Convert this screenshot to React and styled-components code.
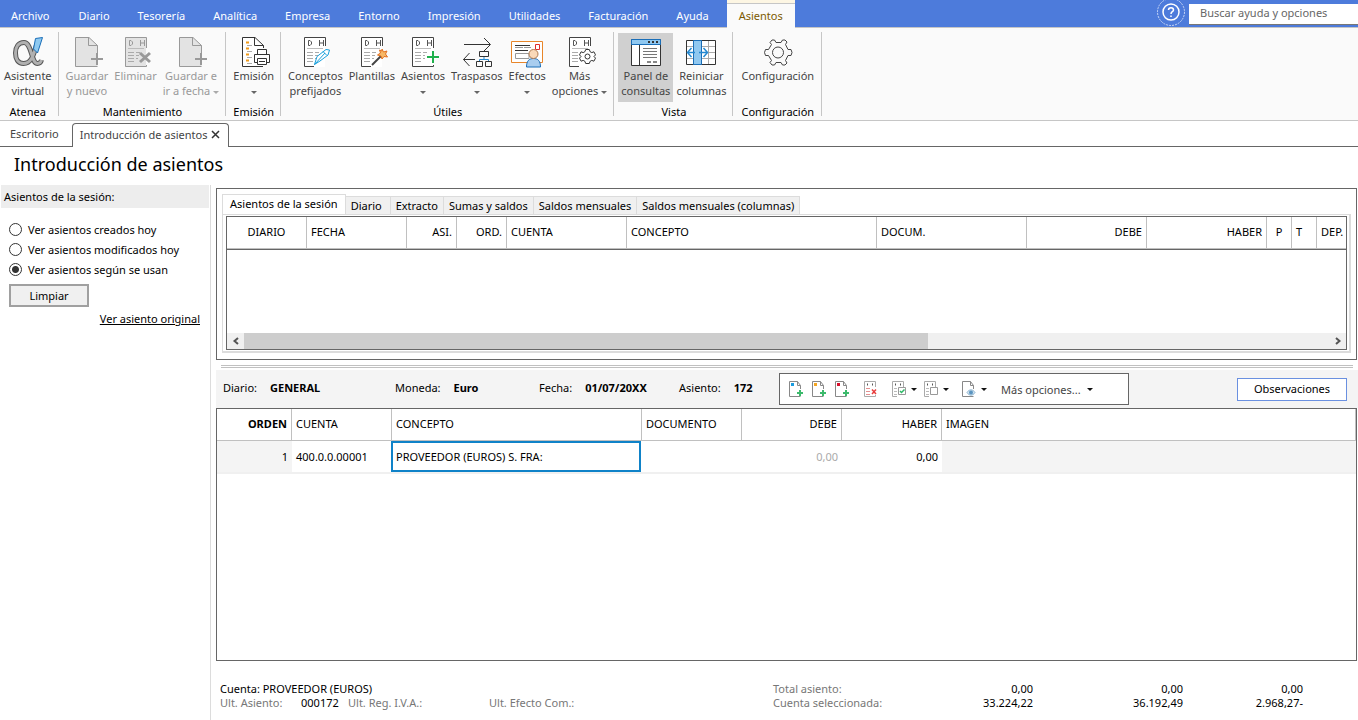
import React, { useState } from 'react';
import styled, { createGlobalStyle, css } from 'styled-components';

const GlobalStyle = createGlobalStyle`
	* {
		box-sizing: border-box;
	}

	body {
		margin: 0;
		background: #fff;
		color: #000;
		font-family: 'Noto Sans', 'Open Sans', sans-serif;
		font-size: 11px;
		line-height: 15px;
	}

	button, input {
		font: inherit;
		color: inherit;
		margin: 0;
	}

	button {
		padding: 0;
		border: 0;
		background: none;
	}
`;

const Page = styled.div`
	display: flex;
	flex-direction: column;
	min-height: 100vh;
	overflow: hidden;
`;

/* menu bar */

const MenuBar = styled.header`
	display: flex;
	justify-content: space-between;
	height: 28px;
	background: #4d7bdb;
	border-bottom: 1px solid #c6c6c6;
`;

const Menu = styled.nav`
	display: flex;
	padding-top: 3px;
`;

const MenuItem = styled.button`
	padding: 0 14px;
	color: #fff;
	white-space: nowrap;

	&:first-child {
		padding: 0 15px 0 11px;
	}

	${({ $active }) => $active && css`
		height: 25px;
		padding: 0 12px 2px;
		margin-left: 4px;
		background: #fafafa;
		border-top: 1px solid #c6c6c6;
		box-shadow: 0 -3px #fdf6e3;
		color: #7d5a00;
	`}
`;

const SearchArea = styled.div`
	display: flex;
	align-items: flex-start;
	gap: 4px;
`;

const HelpButton = styled.button`
	width: 28px;
	height: 26px;
	svg { display: block; }
`;

const SearchInput = styled.input`
	width: 169px;
	height: 21px;
	margin-top: 4px;
	padding: 0 11px 3px;
	border: 0;
	border-bottom: 1px solid #777;
	border-radius: 0;
	background: #fff;
	&::placeholder {
		color: #666;
		opacity: 1;
	}
`;

/* ribbon */

const Ribbon = styled.div`
	display: flex;
	height: 93px;
	padding: 4px 0;
	background: #fafafa;
	border-bottom: 1px solid #c6c6c6;
`;

const Group = styled.section`
	display: flex;
	flex-direction: column;
	padding: 1px 3px 0 4px;
	border-right: 1px solid #c6c6c6;
	&:first-child {
		padding-left: 1px;
	}
	&:last-child {
		padding: 1px 4px 0 5px;
	}
`;

const GroupButtons = styled.div`
	display: flex;
	flex: none;
	height: 69px;
`;

const GroupTitle = styled.h2`
	margin: 0;
	font-size: 11px;
	line-height: 20px;
	font-weight: 400;
	text-align: center;
`;

const ToolButton = styled.button`
	display: flex;
	flex-direction: column;
	align-items: center;
	padding: 3px;
	background: ${({ $pressed }) => ($pressed ? '#d0d0d0' : 'transparent')};
	color: ${({ disabled }) => (disabled ? '#999' : '#444')};
	white-space: nowrap;

	svg {
		display: block;
		flex: none;
	}
`;

const Caret = styled.i`
	display: inline-block;
	margin-left: ${({ $after }) => ($after ? '3px' : '0')};
	border: 3px solid transparent;
	border-top-color: ${({ $color }) => $color || 'currentColor'};
	border-bottom: 0;
	vertical-align: middle;
`;

/* document tabs */

const DocTabs = styled.div`
	display: flex;
	height: 26px;
	padding-top: 2px;
	border-bottom: 1px solid #666;
	color: #444;
`;

const DocTab = styled.button`
	display: flex;
	align-items: center;
	padding: 0 13px 2px 10px;

	${({ $active }) => $active && css`
		gap: 4px;
		height: 24px;
		padding: 0 8px 3px 7px;
		border: 1px solid #666;
		border-bottom: 0;
		border-radius: 4px 4px 0 0;
		background: #fff;
	`}
`;

const Title = styled.h1`
	height: 38px;
	margin: 0;
	padding-left: 14px;
	font-size: 18px;
	line-height: 34px;
	font-weight: 400;
`;

/* body */

const Body = styled.div`
	display: flex;
	flex: 1;
`;

const Sidebar = styled.aside`
	flex: none;
	width: 211px;
	border-right: 1px solid #dcdcdc;
`;

const SidebarTitle = styled.h2`
	margin: 0 1px 11px;
	padding: 4px 3px;
	background: #ededed;
	font-size: 11px;
	font-weight: 400;
`;

const SidebarBody = styled.div`
	display: flex;
	flex-direction: column;
	padding: 0 10px 0 9px;
`;

const Option = styled.label`
	display: flex;
	align-items: center;
	gap: 6px;
	height: 20px;

	input {
		appearance: none;
		width: 13px;
		height: 13px;
		border: 1px solid #333;
		border-radius: 50%;
		background: #fff;
	}

	input:checked {
		background: radial-gradient(circle, #333 0 3px, #fff 4px);
	}
`;

const ClearButton = styled.button`
	width: 80px;
	height: 23px;
	margin: 5px 0 4px;
	border: 2px solid #a0a0a0;
	background: #f0f0f0;
`;

const OriginalLink = styled.a`
	align-self: flex-end;
	color: #000;
`;

const Main = styled.main`
	display: flex;
	flex: 1;
	flex-direction: column;
	min-width: 0;
	padding: 3px 0 0 5px;
`;

const QueryPanel = styled.section`
	height: 172px;
	margin-right: 1px;
	padding: 5px;
	border: 1px solid #666;
`;

const QueryTabs = styled.div`
	display: flex;
	align-items: flex-end;
	height: 20px;
`;

const QueryTab = styled.button`
	min-width: 45px;
	height: 18px;
	padding: 0 5px;
	border: 1px solid #dcdcdc;
	border-left: 0;
	border-bottom: 0;
	background: #f0f0f0;
	text-align: left;
	white-space: nowrap;

	${({ $active }) => $active && css`
		height: 20px;
		padding: 0 7px 2px;
		border-left: 1px solid #dcdcdc;
		background: #fff;
	`}
`;

const QueryContent = styled.div`
	height: 139px;
	padding: 1px 2px 2px 3px;
	border: 1px solid #dcdcdc;
	border-width: 1px 2px 2px 1px;
`;

const QueryGrid = styled.div`
	display: flex;
	flex-direction: column;
	justify-content: space-between;
	height: 134px;
	border: 1px solid #666;
	overflow: hidden;
`;

const Table = styled.table`
	width: 100%;
	border-collapse: separate;
	border-spacing: 0;
	table-layout: fixed;
	white-space: nowrap;
`;

const Th = styled.th`
	height: 32px;
	padding: 0 4px 2px;
	border-right: 1px solid #c0c0c0;
	border-bottom: 1px solid #c0c0c0;
	font-weight: ${({ $bold }) => ($bold ? 700 : 400)};
	text-align: ${({ $align }) => $align || 'left'};
`;

const QueryTable = styled(Table)`
	border-bottom: 1px solid #666;
	th:last-child {
		padding-right: 0;
		border-right: 0;
	}
`;

const Scrollbar = styled.div`
	display: flex;
	height: 16px;
	background: #f0f0f0;

	button {
		flex: none;
		width: 17px;
		height: 16px;
	}

	svg {
		display: block;
		margin: 4px auto;
	}
`;

const Track = styled.div`
	flex: 1;
`;

const Thumb = styled.div`
	width: 63%;
	height: 16px;
	background: #cdcdcd;
`;

const Splitter = styled.div`
	height: 3px;
	margin: 5px 5px 2px;
	border: 1px solid #c0c0c0;
	border-width: 1px 0;
`;

const EntryBar = styled.div`
	display: flex;
	align-items: center;
	height: 38px;
	padding: 0 11px 0 7px;
	background: #f4f4f4;
`;

const Field = styled.div`
	display: flex;
	gap: 13px;
	width: ${({ $width }) => $width}px;
	padding-bottom: 3px;
	white-space: nowrap;
`;

const EntryTools = styled.div`
	display: flex;
	align-items: center;
	width: 350px;
	height: 32px;
	padding-left: 8px;
	border: 1px solid #666;
	background: #fff;
	color: #444;
`;

const EntryTool = styled.button`
	display: flex;
	align-items: center;
	gap: 4px;
	width: ${({ $width }) => $width || 23}px;
	svg { display: block; flex: none; }
`;

const MoreOptions = styled(EntryTool)`
	gap: 6px;
	width: auto;
	padding-left: 5px;
`;

const NotesButton = styled.button`
	width: 110px;
	height: 23px;
	margin-left: auto;
	padding-bottom: 2px;
	border: 1px solid #6a90e0;
	background: #fff;
`;

const EntryGrid = styled.section`
	flex: 1;
	margin-right: 1px;
	border: 1px solid #666;
`;

const Td = styled.td`
	height: 33px;
	padding: 0 4px 1px;
	border-bottom: 2px solid #f0f0f0;
	background: ${({ $shaded }) => ($shaded ? '#f4f4f4' : '#fff')};
	color: ${({ $muted }) => ($muted ? '#aaa' : '#000')};
	text-align: ${({ $align }) => $align || 'left'};
`;

const EditCell = styled(Td)`
	padding: 0;
`;

const CellInput = styled.input`
	display: block;
	width: 250px;
	height: 31px;
	margin-left: -1px;
	padding: 0 3px 1px;
	border: 2px solid #0f82c8;
	border-radius: 0;
	outline: 0;
`;

const Footer = styled.footer`
	display: flex;
	align-items: flex-start;
	justify-content: space-between;
	height: 59px;
	padding: 21px 55px 0 4px;
	line-height: 14px;
	color: #777;
	white-space: nowrap;

	b {
		color: #000;
		font-weight: 400;
	}
`;

const LastItems = styled.div`
	display: flex;
`;

const LastItem = styled.span`
	width: ${({ $width }) => $width}px;
`;

const Totals = styled.table`
	border-collapse: collapse;
	th, td {
		height: 14px;
		padding: 0;
		font-weight: 400;
		text-align: left;
	}
	td {
		width: 120px;
		color: #000;
		text-align: right;
	}
	td:nth-child(2), td:nth-child(3) {
		width: 150px;
	}
	th {
		width: 110px;
	}
`;

/* icons */

const Icon = ({ children, size = 32, height = size }) => (
	<svg width={size} height={height} viewBox={`0 0 ${size} ${height}`} fill="none" aria-hidden="true">
		{children}
	</svg>
);

const PagePlusIcon = () => (
	<Icon>
		<path d="M4.500 1.500H18L26.500 9.500V30.500H4.500Z" fill="#e3e3e3" />
		<path d="M26.500 17V9.500L18 1.500H4.500V30.500H26.500M17.500 1.500V9.500H26.500" stroke="#999" />
		<path d="M26 17V29M20 23H32" stroke="#999" strokeWidth="2" />
	</Icon>
);

// debit/credit sheet shared by several ribbon icons
const LedgerSheet = ({ muted, short }) => (
	<>
		<path d="M5 1H26V31H5Z" fill={muted ? '#e3e3e3' : '#fff'} />
		<path d={short ? 'M26.500 10V1.500H5.500V30.500H15' : 'M26.500 12V1.500H5.500V30.500H26.500V29'} stroke={muted ? '#999' : '#444'} />
		<path d="M9.500 4.500H11L12.500 6V8L11 9.500H9.500ZM20.500 4V10M24.500 4V10M20.500 7H24.500" stroke={muted ? '#999' : '#555'} />
		<path d="M8 12.500H24" stroke="#bbb" />
		<path d="M8 16.500H14M8 19.500H14M8 22.500H14M8 25.500H14M16 16.500H20M16 19.500H19M16 22.500H18" stroke="#aaa" />
	</>
);

const AlphaIcon = () => (
	<Icon>
		<path d="M24.500 9C22 17 20 27.500 11.500 27.500C6 27.500 3.500 23 3.500 17C3.500 11 6.500 6.500 12 6.500C20 6.500 19 27.500 25.500 27.500C28 27.500 29 26 29.500 24" stroke="#555" strokeWidth="5" />
		<path d="M24.500 9C22 17 20 27.500 11.500 27.500C6 27.500 3.500 23 3.500 17C3.500 11 6.500 6.500 12 6.500C20 6.500 19 27.500 25.500 27.500C28 27.500 29 26 29.500 24" stroke="#b0b0b0" strokeWidth="3" />
		<path d="M23.500 2.500L30.500 1.500L25.500 17L21.500 13Z" fill="#8ec9f0" stroke="#1a6eb8" />
	</Icon>
);

const EraseIcon = () => (
	<Icon>
		<LedgerSheet muted />
		<path d="M20 17L30 26M30 17L20 26" stroke="#999" strokeWidth="3" />
	</Icon>
);

const PrintIcon = () => (
	<Icon>
		<path d="M25.500 12V9.500L17 1.500H4.500V30.500H25M16.500 1.500V9.500H25.500" fill="#fff" stroke="#333" />
		<path d="M8 6.500H11M8 12.500H11M8 18.500H11M8 24.500H11" stroke="#f09a1a" strokeWidth="2" />
		<path d="M9 9.500H14M9 15.500H14M9 21.500H14M9 27.500H14" stroke="#aaa" />
		<path d="M19.500 18V13.500H28.500V18M19.500 26.500H16.500V18.500H31.500V26.500H28.500M19.500 22.500H28.500V28.500H19.500ZM21 25.500H27" fill="#fff" stroke="#333" />
	</Icon>
);

const PenIcon = () => (
	<Icon>
		<LedgerSheet short />
		<path d="M15.500 28.500L18 20.500L27 13.500L30.500 14L29 19L21 25ZM15.500 28.500L26 17M24 15.500L28 19.500" fill="#fff" stroke="#18a0dc" />
	</Icon>
);

const WandIcon = () => (
	<Icon>
		<LedgerSheet short />
		<path d="M16 29L25 20" stroke="#444" strokeWidth="2" />
		<path d="M26 13L27.500 16L31 15L29.500 18L31.500 21L28 20.500L26 23L25 20L21.500 19L24.500 17L23.500 14L26 15Z" fill="#f7b866" stroke="#e27020" />
	</Icon>
);

const AddEntryIcon = () => (
	<Icon>
		<LedgerSheet />
		<path d="M25 14V28M18 21H32" stroke="#fff" strokeWidth="4" />
		<path d="M26 15V27M20 21H32" stroke="#1eb04c" strokeWidth="2" />
	</Icon>
);

const TransferIcon = () => (
	<Icon>
		<path d="M3 8.500H29M23 2L29.500 8.500L23 15M2.500 23.500H14M8.500 17L2.500 23.500L8.500 30" stroke="#333" />
		<path d="M18.500 15.500H27.500V20.500H18.500ZM15.500 25.500H21.500V30.500H15.500ZM24.500 25.500H30.500V30.500H24.500Z" stroke="#333" />
		<path d="M23 21V23M18.500 25V23.500H27.500V25" stroke="#2488d0" />
	</Icon>
);

const BillsIcon = () => (
	<Icon>
		<path d="M.500 5.500H31.500V26.500H.500Z" fill="#fff" stroke="#e8862a" />
		<path d="M4 9.500H19M4 14.500H17" stroke="#333" />
		<path d="M4 11.500H12M13 11.500H20M4.500 17.500H18V22.500H4.500Z" stroke="#999" />
		<path d="M24.500 8.500H28.500V13.500H24.500Z" stroke="#e02c2c" />
		<path d="M15.500 31C15.500 25 18 22.500 22.500 22.500S29.500 25 29.500 31Z" fill="#a9cdef" stroke="#1a6eb8" />
		<circle cx="22.500" cy="18" r="4.500" fill="#fad9b8" stroke="#b07a50" />
	</Icon>
);

const gearPath = 'M-1.800 -7H1.800L2.600 -4.800L4.300 -3.900L6.400 -4.700L8 -1.600L6.500 0L8 1.600L6.400 4.700L4.300 3.900L2.600 4.800L1.800 7H-1.800L-2.600 4.800L-4.300 3.900L-6.400 4.700L-8 1.600L-6.500 0L-8 -1.600L-6.400 -4.700L-4.300 -3.900L-2.600 -4.800Z';

const SheetGearIcon = () => (
	<Icon>
		<LedgerSheet short />
		<g transform="translate(23.500 20.500)" stroke="#333">
			<path d={gearPath} fill="#fff" />
			<circle r="2.500" />
		</g>
	</Icon>
);

const PanelIcon = () => (
	<Icon>
		<path d="M1.500 3.500H30.500V29.500H1.500Z" fill="#fff" stroke="#333" />
		<path d="M1.500 3.500H30.500V8.500H1.500Z" fill="#90c8f0" stroke="#1a6eb8" />
		<path d="M9.500 9V29" stroke="#333" />
		<path d="M18 6H20M22 6H24M26 6H28" stroke="#333" strokeWidth="2" />
		<path d="M13 12.500H27M13 15.500H27M13 18.500H27M13 21.500H27" stroke="#777" />
		<path d="M17 26H21M23 26H27" stroke="#888" strokeWidth="2" />
	</Icon>
);

const ColumnsIcon = () => (
	<Icon>
		<path d="M1.500 4.500H30.500V28.500H1.500Z" fill="#fff" stroke="#333" />
		<path d="M2 10.500H30M2 16.500H30M2 22.500H30M23.500 5V28" stroke="#aaa" />
		<path d="M8.500 4.500H16.500V28.500H8.500Z" fill="#90c8f0" stroke="#1a6eb8" />
		<path d="M10 16.500H2.500M6.500 12L2.500 16.500L6.500 21M14 16.500H22.500M18.500 12L22.500 16.500L18.500 21" stroke="#2488d0" strokeWidth="1.500" />
	</Icon>
);

const GearIcon = () => (
	<Icon>
		<g transform="translate(16 16.500)" stroke="#444">
			<path d="M-13.500 0L-12.500 -3H-9.500L-6.500 -8L-8 -10L-6 -12.500H-3.500L-2 -10H3L4.500 -12.500H7L9 -10.500L7.500 -8L10 -3H13L14 0L13 3H10L7.500 8L9 10.500L7 12.500H4.500L3 10H-2L-3.500 12.500H-6L-8 10L-6.500 8L-9.500 3H-12.500Z" />
			<circle r="5.500" />
		</g>
	</Icon>
);

const HelpIcon = () => (
	<Icon size={28} height={26}>
		<circle cx="14" cy="12" r="13.500" stroke="#c4d4f6" strokeDasharray="2 1" />
		<circle cx="14" cy="12" r="8" stroke="#fff" strokeWidth="1.500" />
		<path d="M11.500 10C11.500 7 16.500 7 16.500 10C16.500 12 14 11.500 14 14M14 15.500V17" stroke="#fff" strokeWidth="1.500" />
	</Icon>
);

const SmallPage = ({ children }) => (
	<Icon size={16}>
		<path d="M12.500 8V4.500L9.500 .500V4.500H12.500M9.500 .500H1.500V15.500H12.500" stroke="#888" />
		{children}
	</Icon>
);

const NewPageIcon = ({ color }) => (
	<SmallPage>
		<path d="M3 2H6V5H3Z" fill={color} />
		<path d="M12 9V15M9 12H15" stroke="#3cba6c" strokeWidth="2" />
	</SmallPage>
);

const SmallSheet = ({ children }) => (
	<Icon size={16}>
		<path d="M1.500 15.500V.500H12.500V6M1.500 15.500H6" stroke="#aaa" />
		<path d="M4 3.500H5M9 3.500H10" stroke="#555" strokeWidth="2" />
		{children}
	</Icon>
);

const SheetDeleteIcon = () => (
	<SmallSheet>
		<path d="M6 15.500H12.500V14" stroke="#aaa" />
		<path d="M3 7.500H7M3 10.500H7M3 13.500H7" stroke="#e49090" />
		<path d="M9 8.500L13 13M13 8.500L9 13" stroke="#e83c3c" strokeWidth="1.500" />
	</SmallSheet>
);

const SheetCheckIcon = ({ empty }) => (
	<SmallSheet>
		<path d="M3 7.500H6M3 10.500H6M3 13.500H6" stroke="#bbb" />
		<path d="M7.500 6.500H14.500V13.500H7.500Z" fill="#fff" stroke="#999" />
		{!empty && <path d="M9 10L10.500 11.500L13.500 8.500" stroke="#2db866" strokeWidth="1.500" />}
	</SmallSheet>
);

const ViewPageIcon = () => (
	<SmallPage>
		<path d="M6 11.500C8 8 12 8 14 11.500C12 15 8 15 6 11.500Z" fill="#d5e6f2" stroke="#8db4d0" />
		<circle cx="10" cy="11.500" r="2" fill="#5a94c0" />
	</SmallPage>
);

const Chevron = ({ right }) => (
	<Icon size={8}>
		<path d={right ? 'M2 1L5.500 4L2 7' : 'M6 1L2.500 4L6 7'} stroke="#555" strokeWidth="2" />
	</Icon>
);

/* data */

const menus = ['Archivo', 'Diario', 'Tesorería', 'Analítica', 'Empresa', 'Entorno', 'Impresión', 'Utilidades', 'Facturación', 'Ayuda', 'Asientos'];

const groups = [
	{ title: 'Atenea', tools: [{ lines: ['Asistente', 'virtual'], icon: AlphaIcon }] },
	{
		title: 'Mantenimiento',
		tools: [
			{ lines: ['Guardar', 'y nuevo'], icon: PagePlusIcon, disabled: true },
			{ lines: ['Eliminar'], icon: EraseIcon, disabled: true },
			{ lines: ['Guardar e', 'ir a fecha'], icon: PagePlusIcon, disabled: true, menu: true },
		],
	},
	{ title: 'Emisión', tools: [{ lines: ['Emisión', ''], icon: PrintIcon, menu: true }] },
	{
		title: 'Útiles',
		tools: [
			{ lines: ['Conceptos', 'prefijados'], icon: PenIcon },
			{ lines: ['Plantillas'], icon: WandIcon },
			{ lines: ['Asientos', ''], icon: AddEntryIcon, menu: true },
			{ lines: ['Traspasos', ''], icon: TransferIcon, menu: true },
			{ lines: ['Efectos', ''], icon: BillsIcon, menu: true },
			{ lines: ['Más', 'opciones'], icon: SheetGearIcon, menu: true },
		],
	},
	{
		title: 'Vista',
		tools: [
			{ lines: ['Panel de', 'consultas'], icon: PanelIcon, pressed: true },
			{ lines: ['Reiniciar', 'columnas'], icon: ColumnsIcon },
		],
	},
	{ title: 'Configuración', tools: [{ lines: ['Configuración'], icon: GearIcon }] },
];

const options = ['Ver asientos creados hoy', 'Ver asientos modificados hoy', 'Ver asientos según se usan'];

const queryTabs = ['Asientos de la sesión', 'Diario', 'Extracto', 'Sumas y saldos', 'Saldos mensuales', 'Saldos mensuales (columnas)'];

const queryColumns = [
	{ name: 'DIARIO', width: 80, align: 'center' },
	{ name: 'FECHA', width: 100 },
	{ name: 'ASI.', width: 50, align: 'right' },
	{ name: 'ORD.', width: 50, align: 'right' },
	{ name: 'CUENTA', width: 120 },
	{ name: 'CONCEPTO', width: 250 },
	{ name: 'DOCUM.', width: 150 },
	{ name: 'DEBE', width: 120, align: 'right' },
	{ name: 'HABER', width: 120, align: 'right' },
	{ name: 'P', width: 25, align: 'center' },
	{ name: 'T', width: 25 },
	{ name: 'DEP.' },
];

const entryColumns = [
	{ name: 'ORDEN', width: 75, align: 'right', bold: true },
	{ name: 'CUENTA', width: 100 },
	{ name: 'CONCEPTO', width: 250 },
	{ name: 'DOCUMENTO', width: 100 },
	{ name: 'DEBE', width: 100, align: 'right' },
	{ name: 'HABER', width: 100, align: 'right' },
	{ name: 'IMAGEN' },
];

const ColumnHead = ({ columns }) => (
	<>
		<colgroup>
			{columns.map((col) => <col key={col.name} width={col.width} />)}
		</colgroup>
		<thead>
			<tr>
				{columns.map((col) => (
					<Th key={col.name} scope="col" $align={col.align} $bold={col.bold}>{col.name}</Th>
				))}
			</tr>
		</thead>
	</>
);

const Tool = ({ lines, icon: ToolIcon, menu, pressed, disabled }) => (
	<ToolButton type="button" disabled={disabled} $pressed={pressed}>
		<ToolIcon />
		<span>{lines[0]}</span>
		{lines.length > 1 && (
			<span>
				{lines[1]}
				{menu && <Caret $after={lines[1] !== ''} $color={disabled ? '#aaa' : '#666'} />}
			</span>
		)}
	</ToolButton>
);

const App = () => {
	const [option, setOption] = useState(2);
	const [tab, setTab] = useState(0);
	const [concept, setConcept] = useState('PROVEEDOR (EUROS) S. FRA:');

	return (
		<Page>
			<GlobalStyle />
			<MenuBar>
				<Menu>
					{menus.map((name) => (
						<MenuItem key={name} type="button" $active={name === 'Asientos'}>{name}</MenuItem>
					))}
				</Menu>
				<SearchArea>
					<HelpButton type="button" aria-label="Ayuda"><HelpIcon /></HelpButton>
					<SearchInput type="text" aria-label="Buscar ayuda y opciones" placeholder="Buscar ayuda y opciones" />
				</SearchArea>
			</MenuBar>

			<Ribbon>
				{groups.map((group) => (
					<Group key={group.title}>
						<GroupButtons>
							{group.tools.map((tool) => <Tool key={tool.lines.join(' ')} {...tool} />)}
						</GroupButtons>
						<GroupTitle>{group.title}</GroupTitle>
					</Group>
				))}
			</Ribbon>

			<DocTabs>
				<DocTab type="button">Escritorio</DocTab>
				<DocTab type="button" $active>
					Introducción de asientos
					<Icon size={9}><path d="M1 1L8 8M8 1L1 8" stroke="#333" strokeWidth="1.500" /></Icon>
				</DocTab>
			</DocTabs>
			<Title>Introducción de asientos</Title>

			<Body>
				<Sidebar>
					<SidebarTitle>Asientos de la sesión:</SidebarTitle>
					<SidebarBody>
						{options.map((text, index) => (
							<Option key={text}>
								<input type="radio" name="session" checked={option === index} onChange={() => setOption(index)} />
								{text}
							</Option>
						))}
						<ClearButton type="button">Limpiar</ClearButton>
						<OriginalLink href="#original">Ver asiento original</OriginalLink>
					</SidebarBody>
				</Sidebar>

				<Main>
					<QueryPanel>
						<QueryTabs>
							{queryTabs.map((name, index) => (
								<QueryTab key={name} type="button" $active={tab === index} onClick={() => setTab(index)}>{name}</QueryTab>
							))}
						</QueryTabs>
						<QueryContent>
							<QueryGrid>
								<QueryTable><ColumnHead columns={queryColumns} /></QueryTable>
								<Scrollbar>
									<button type="button" aria-label="Anterior"><Chevron /></button>
									<Track><Thumb /></Track>
									<button type="button" aria-label="Siguiente"><Chevron right /></button>
								</Scrollbar>
							</QueryGrid>
						</QueryContent>
					</QueryPanel>

					<Splitter />

					<EntryBar>
						<Field $width={172}><span>Diario:</span><b>GENERAL</b></Field>
						<Field $width={144}><span>Moneda:</span><b>Euro</b></Field>
						<Field $width={140}><span>Fecha:</span><b>01/07/20XX</b></Field>
						<Field $width={100}><span>Asiento:</span><b>172</b></Field>
						<EntryTools>
							<EntryTool type="button" aria-label="Nuevo azul"><NewPageIcon color="#1a9ce0" /></EntryTool>
							<EntryTool type="button" aria-label="Nuevo naranja"><NewPageIcon color="#f5a623" /></EntryTool>
							<EntryTool type="button" aria-label="Nuevo rojo" $width={29}><NewPageIcon color="#d8102c" /></EntryTool>
							<EntryTool type="button" aria-label="Borrar" $width={28}><SheetDeleteIcon /></EntryTool>
							<EntryTool type="button" aria-label="Marcar" $width={32}><SheetCheckIcon /><Caret $color="#111" /></EntryTool>
							<EntryTool type="button" aria-label="Desmarcar" $width={38}><SheetCheckIcon empty /><Caret $color="#111" /></EntryTool>
							<EntryTool type="button" aria-label="Ver" $width={35}><ViewPageIcon /><Caret $color="#111" /></EntryTool>
							<MoreOptions type="button">Más opciones...<Caret $color="#111" /></MoreOptions>
						</EntryTools>
						<NotesButton type="button">Observaciones</NotesButton>
					</EntryBar>

					<EntryGrid>
						<Table>
							<ColumnHead columns={entryColumns} />
							<tbody>
								<tr>
									<Td $align="right" $shaded>1</Td>
									<Td>400.0.0.00001</Td>
									<EditCell>
										<CellInput type="text" aria-label="Concepto" value={concept} onChange={(e) => setConcept(e.target.value)} />
									</EditCell>
									<Td />
									<Td $align="right" $muted>0,00</Td>
									<Td $align="right">0,00</Td>
									<Td $shaded />
								</tr>
							</tbody>
						</Table>
					</EntryGrid>

					<Footer>
						<div>
							<b>Cuenta: PROVEEDOR (EUROS)</b>
							<LastItems>
								<LastItem $width={81}>Ult. Asiento:</LastItem>
								<LastItem $width={47}><b>000172</b></LastItem>
								<LastItem $width={141}>Ult. Reg. I.V.A.:</LastItem>
								<LastItem>Ult. Efecto Com.:</LastItem>
							</LastItems>
						</div>
						<Totals>
							<tbody>
								<tr><th scope="row">Total asiento:</th><td>0,00</td><td>0,00</td><td>0,00</td></tr>
								<tr><th scope="row">Cuenta seleccionada:</th><td>33.224,22</td><td>36.192,49</td><td>2.968,27-</td></tr>
							</tbody>
						</Totals>
					</Footer>
				</Main>
			</Body>
		</Page>
	);
};

export default App;
